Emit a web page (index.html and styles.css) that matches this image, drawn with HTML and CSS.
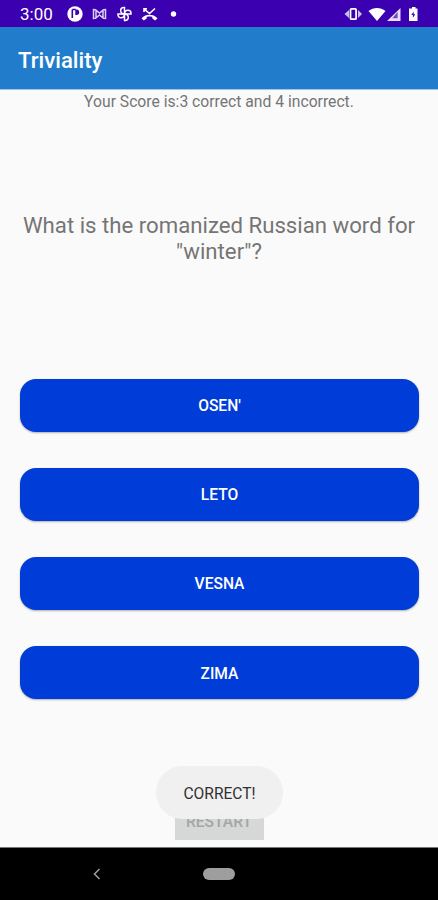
FILE: index.html
```html
<!DOCTYPE html>
<html lang="en">
<head>
  <meta charset="UTF-8" />
  <meta name="viewport" content="width=device-width, initial-scale=1.0" />
  <title>Triviality</title>
  <link rel="stylesheet" href="styles.css">
</head>
<body>
  <div class="status-bar">
    <span class="clock">3:00</span>
    <svg class="notifications" width="114" height="18" viewBox="0 0 114 18">
      <circle cx="8" cy="9" r="7.7" fill="#fff"/>
      <path d="M5.300 4.500h3.500M5.300 4.500v8.500" stroke="#3b00b0" stroke-width="1.600"/>
      <path d="M8.300 4.500h1.200a2.700 2.700 0 0 1 0 5.400H8.300z" fill="#3b00b0"/>
      <path d="M26.500 13.500v-9l2 .3 4 3.200 4-3.200 2-.3v9l-2-.2-4-3.300-4 3.300zM29 6v6.500M36 6v6.500" fill="none" stroke="#d9cef5" stroke-width="1.500"/>
      <g fill="none" stroke="#fff" stroke-width="1.500">
        <path d="M57.500 9V2.500h-.8a3 3 0 0 0-3 3c0 2 1.500 3.500 3.800 3.500"/>
        <path d="M57.500 9H64v-.8a3 3 0 0 0-3-3c-2 0-3.500 1.500-3.500 3.800"/>
        <path d="M57.500 9v6.500h.8a3 3 0 0 0 3-3c0-2-1.500-3.500-3.800-3.500"/>
        <path d="M57.500 9H51v.8a3 3 0 0 0 3 3c2 0 3.500-1.500 3.500-3.800"/>
      </g>
      <path d="M77 7V3.800H80M77.500 4.300l5 4.200 5.500-5" fill="none" stroke="#fff" stroke-width="1.600"/>
      <path d="M74.500 13.200c4.500-4.600 11.500-4.600 16 0l-2.300 2.300-2.900-2v-1.500c-1.800-.6-3.800-.6-5.600 0v1.500l-2.900 2z" fill="#fff"/>
      <circle cx="106.500" cy="9" r="2.700" fill="#fff"/>
    </svg>
    <svg class="system-icons" width="76" height="18" viewBox="0 0 76 18">
      <path d="M5 5L0.500 9 5 13zM14 5l4 4-4 4z" fill="#cdbff0"/>
      <rect x="6.500" y="3.800" width="5.600" height="10.400" rx="1" fill="none" stroke="#fff" stroke-width="1.800"/>
      <path d="M24.500 6c5-4 12-4 17 0L33 16z" fill="#fff"/>
      <path d="M56.500 3v13H43z" fill="#e8e0fa"/>
      <path d="M53.600 7v6.300h-5.300z" fill="#3b00b0" opacity=".7"/>
      <path d="M66 3.500h2V2h3.500v1.500h2V16H65V3.500z" fill="#fff"/>
      <path d="M69.700 6.500l-2.400 3.500h1.600v2.700l2.400-3.500h-1.600z" fill="#3b00b0"/>
    </svg>
  </div>

  <header class="app-bar">
    <h1 class="app-title">Triviality</h1>
  </header>

  <main class="quiz">
    <p class="score">Your Score is:3 correct and 4 incorrect.</p>
    <p class="question">What is the romanized Russian word for "winter"?</p>
    <div class="answers">
      <button class="answer">OSEN'</button>
      <button class="answer">LETO</button>
      <button class="answer">VESNA</button>
      <button class="answer">ZIMA</button>
    </div>
    <button class="restart">RESTART</button>
    <div class="toast">CORRECT!</div>
  </main>

  <nav class="nav-bar">
    <svg class="back" width="10" height="14" viewBox="0 0 10 14">
      <path d="M7.500 2L2.500 7l5 5" fill="none" stroke="#9a9a9a" stroke-width="1.600"/>
    </svg>
    <div class="home"></div>
  </nav>
</body>
</html>
```

FILE: styles.css
```css
html, body {
  margin: 0;
  padding: 0;
  height: 100%;
}
body {
  display: flex;
  flex-direction: column;
  overflow: hidden;
  font-family: Roboto, "Liberation Sans", sans-serif;
  background: #fafafa;
}
button {
  font-family: inherit;
  border: none;
  padding: 0;
}
.status-bar {
  display: flex;
  align-items: center;
  flex: none;
  height: 27px;
  padding: 1px 18px 0 20px;
  box-sizing: border-box;
  background: #3b00b0;
  color: white;
}
.clock {
  width: 47px;
  font-size: 17px;
  line-height: 18px;
}
.system-icons {
  margin-left: auto;
}
.app-bar {
  display: flex;
  align-items: center;
  flex: none;
  height: 63px;
  padding: 3px 18px 0;
  box-sizing: border-box;
  background: #217dcb;
  border-bottom: 1px solid #9cc5e8;
}
.app-title {
  margin: 0;
  font-size: 22.2px;
  font-weight: 500;
  color: white;
}
.quiz {
  position: relative;
  display: flex;
  flex-direction: column;
  align-items: center;
  flex: 1;
  color: #757575;
}
.score {
  margin: 2px 0 0;
  font-size: 15.7px;
  line-height: 19px;
}
.question {
  margin: 101px 20px 0;
  font-size: 22.2px;
  line-height: 26px;
  text-align: center;
}
.answers {
  display: flex;
  flex-direction: column;
  align-self: stretch;
  gap: 36px;
  margin: 114.5px 19px 0 20px;
}
.answer {
  height: 53.2px;
  padding-top: 2px;
  border-radius: 16px;
  background: #003cd7;
  color: white;
  font-size: 15.6px;
  font-weight: 500;
  box-shadow: 0 1px 2px rgba(0, 0, 0, 0.3);
}
.restart {
  width: 89px;
  height: 39px;
  margin-top: 102px;
  padding-top: 2px;
  background: #d6d7d7;
  color: #a5a6a6;
  font-size: 15.6px;
  font-weight: 500;
}
.toast {
  position: absolute;
  bottom: 28px;
  left: 156px;
  width: 127px;
  height: 53px;
  line-height: 56px;
  border-radius: 27px;
  background: rgba(240, 240, 240, 0.98);
  color: #303030;
  font-size: 15.6px;
  text-align: center;
}
.nav-bar {
  display: grid;
  grid-template-columns: 1fr 32px 1fr;
  align-items: center;
  flex: none;
  height: 53px;
  box-sizing: border-box;
  border-top: 1px solid #777;
  background: black;
}
.back {
  margin-left: 92px;
}
.home {
  height: 12px;
  border-radius: 6px;
  background: #9e9e9e;
}
```
